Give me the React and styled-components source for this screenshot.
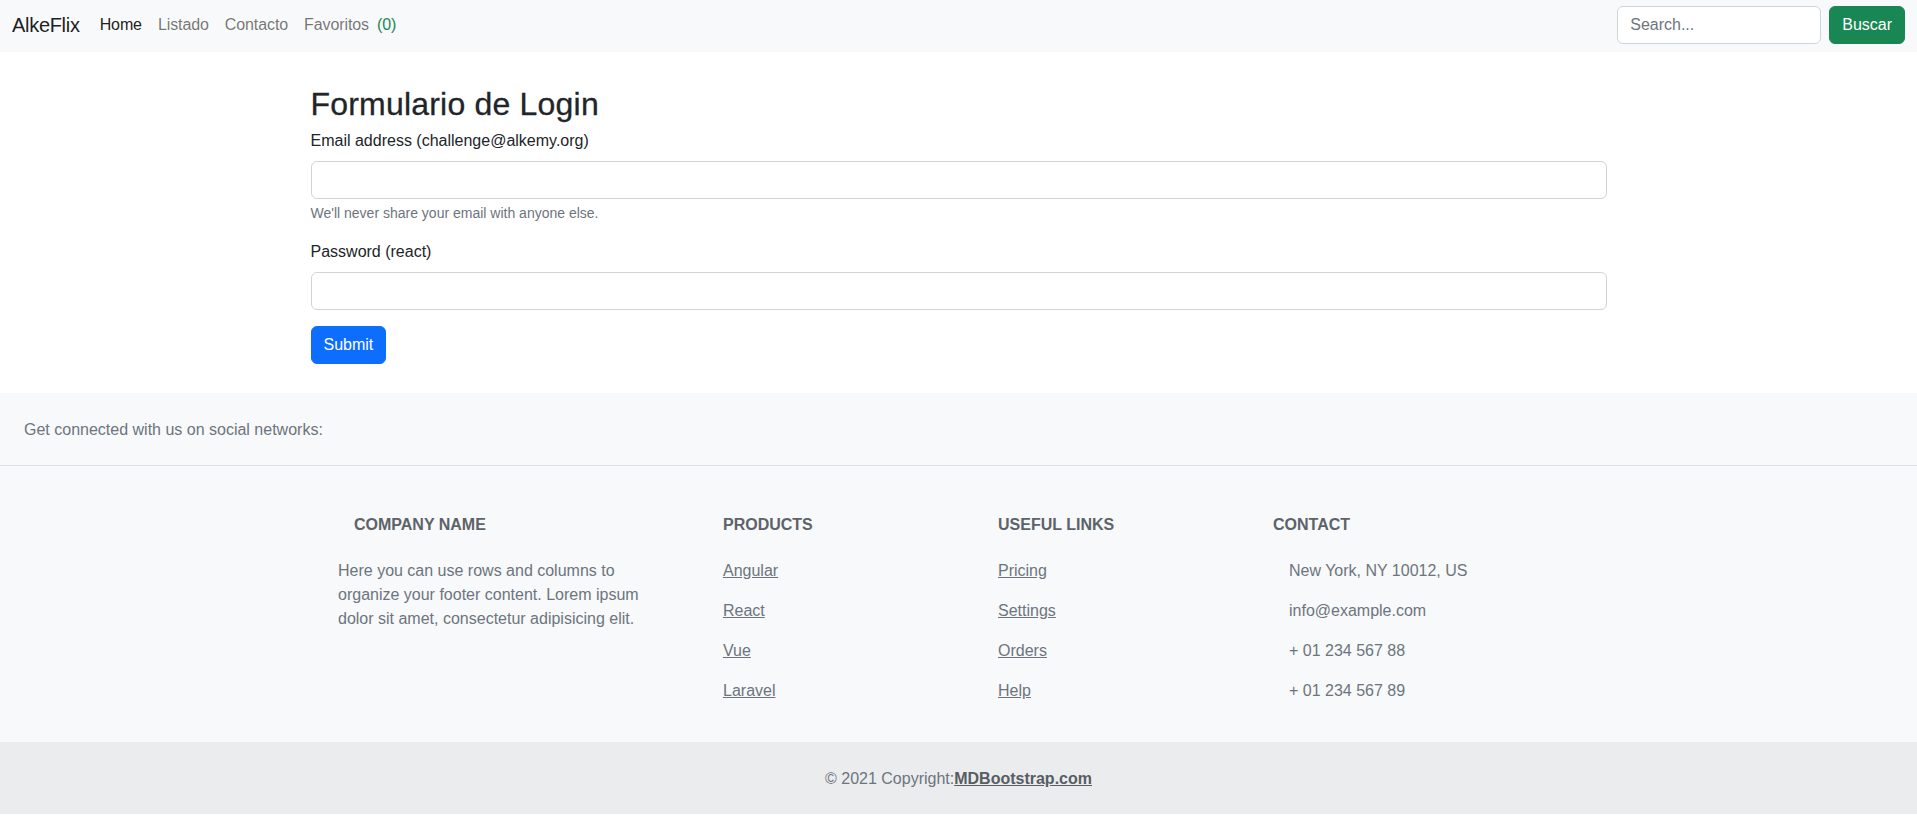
import React from 'react';
import styled, { createGlobalStyle } from 'styled-components';

const GlobalStyle = createGlobalStyle`
  * {
    box-sizing: border-box;
  }

  body {
    margin: 0;
    background-color: #ffffff;
    color: #212529;
    font-family: "Liberation Sans", Arial, sans-serif;
    font-size: 16px;
    line-height: 1.5;
  }
`;

const Navbar = styled.nav`
  display: flex;
  align-items: center;
  justify-content: space-between;
  height: 52px;
  padding: 0 12px 3px 12px;
  background-color: #f8f9fa;
`;

const NavLeft = styled.div`
  display: flex;
  align-items: center;
`;

const Brand = styled.a`
  margin-right: 12px;
  color: rgba(0, 0, 0, 0.9);
  font-size: 20px;
  line-height: 30px;
  letter-spacing: -0.3px;
  text-decoration: none;
`;

const NavLink = styled.a`
  padding: 8px;
  color: ${(p) => (p.$active ? 'rgba(0, 0, 0, 0.9)' : 'rgba(0, 0, 0, 0.55)')};
  letter-spacing: -0.1px;
  text-decoration: none;
`;

const Count = styled.span`
  margin-left: 8px;
  color: #198754;
`;

const SearchForm = styled.form`
  display: flex;
  align-items: center;
  gap: 8px;
`;

const SearchInput = styled.input`
  width: 204px;
  height: 38px;
  padding: 6px 12px;
  border: 1px solid #ced4da;
  border-radius: 6px;
  background-color: #ffffff;
  font-family: inherit;
  font-size: 16px;
  color: #212529;

  &::placeholder {
    color: #6c757d;
  }
`;

const Button = styled.button`
  height: 38px;
  padding: 6px 12px;
  border: 1px solid ${(p) => p.$color};
  border-radius: 6px;
  background-color: ${(p) => p.$color};
  color: #ffffff;
  font-family: inherit;
  font-size: 16px;
  line-height: 1.5;
  cursor: pointer;
`;

const Main = styled.main`
  max-width: 1320px;
  margin: 0 auto;
  padding: 33px 12px 29px;
`;

const Title = styled.h2`
  margin: 0 0 6px;
  font-size: 32px;
  font-weight: 500;
  line-height: 1.2;
  letter-spacing: 0.2px;
  -webkit-text-stroke: 0.3px #212529;
`;

const Field = styled.div`
  margin-bottom: 16px;
`;

const Label = styled.label`
  display: block;
  margin-bottom: 8px;
`;

const TextInput = styled.input`
  display: block;
  width: 100%;
  height: 38px;
  padding: 6px 12px;
  border: 1px solid #ced4da;
  border-radius: 6px;
  font-family: inherit;
  font-size: 16px;
`;

const HelpText = styled.div`
  margin-top: 4px;
  color: #6c757d;
  font-size: 14px;
`;

const Footer = styled.footer`
  background-color: #f8f9fa;
  color: #6c757d;
`;

const SocialBar = styled.section`
  display: flex;
  justify-content: space-between;
  padding: 25px 24px 23px;
  border-bottom: 1px solid #dee2e6;
`;

const FooterContainer = styled.div`
  max-width: 1320px;
  margin: 0 auto;
  padding: 49px 0 0;
`;

const FooterRow = styled.div`
  display: flex;
  justify-content: space-around;
`;

const FooterCol = styled.div`
  width: ${(p) => p.$width}px;
  padding: 0 12px;
  margin-bottom: 23px;
`;

const ColTitle = styled.h6`
  margin: 0 0 24px;
  font-size: 16px;
  font-weight: 700;
  line-height: 1.2;
  text-transform: uppercase;
  color: #5c6369;
`;

const IconSlot = styled.i`
  display: inline-block;
  margin-right: 16px;
`;

const FooterText = styled.p`
  margin: 0 0 16px;
`;

const FooterLink = styled.a`
  color: inherit;
  text-decoration: underline;
`;

const Copyright = styled.div`
  padding: 25px 24px 23px;
  text-align: center;
  background-color: rgba(0, 0, 0, 0.05);
`;

const BoldLink = styled.a`
  color: #575d63;
  font-weight: 700;
  text-decoration: underline;
`;

const products = ['Angular', 'React', 'Vue', 'Laravel'];
const usefulLinks = ['Pricing', 'Settings', 'Orders', 'Help'];
const contacts = ['New York, NY 10012, US', 'info@example.com', '+ 01 234 567 88', '+ 01 234 567 89'];

export default function App() {
  return (
    <>
      <GlobalStyle />
      <Navbar>
        <NavLeft>
          <Brand href="#">AlkeFlix</Brand>
          <NavLink href="#" $active>Home</NavLink>
          <NavLink href="#">Listado</NavLink>
          <NavLink href="#">Contacto</NavLink>
          <NavLink href="#">
            Favoritos<Count>(0)</Count>
          </NavLink>
        </NavLeft>
        <SearchForm onSubmit={(e) => e.preventDefault()}>
          <SearchInput type="text" placeholder="Search..." />
          <Button type="submit" $color="#198754">Buscar</Button>
        </SearchForm>
      </Navbar>

      <Main>
        <Title>Formulario de Login</Title>
        <form onSubmit={(e) => e.preventDefault()}>
          <Field>
            <Label>Email address (challenge@alkemy.org)</Label>
            <TextInput type="email" />
            <HelpText>We'll never share your email with anyone else.</HelpText>
          </Field>
          <Field>
            <Label>Password (react)</Label>
            <TextInput type="password" />
          </Field>
          <Button type="submit" $color="#0d6efd">Submit</Button>
        </form>
      </Main>

      <Footer>
        <SocialBar>
          <span>Get connected with us on social networks:</span>
        </SocialBar>
        <FooterContainer>
          <FooterRow>
            <FooterCol $width={330}>
              <ColTitle><IconSlot />Company name</ColTitle>
              <FooterText>
                Here you can use rows and columns to organize your footer content. Lorem ipsum
                dolor sit amet, consectetur adipisicing elit.
              </FooterText>
            </FooterCol>
            <FooterCol $width={220}>
              <ColTitle>Products</ColTitle>
              {products.map((p) => (
                <FooterText key={p}><FooterLink href="#">{p}</FooterLink></FooterText>
              ))}
            </FooterCol>
            <FooterCol $width={220}>
              <ColTitle>Useful links</ColTitle>
              {usefulLinks.map((p) => (
                <FooterText key={p}><FooterLink href="#">{p}</FooterLink></FooterText>
              ))}
            </FooterCol>
            <FooterCol $width={330}>
              <ColTitle>Contact</ColTitle>
              {contacts.map((c) => (
                <FooterText key={c}><IconSlot />{c}</FooterText>
              ))}
            </FooterCol>
          </FooterRow>
        </FooterContainer>
        <Copyright>
          © 2021 Copyright:<BoldLink href="#">MDBootstrap.com</BoldLink>
        </Copyright>
      </Footer>
    </>
  );
}
